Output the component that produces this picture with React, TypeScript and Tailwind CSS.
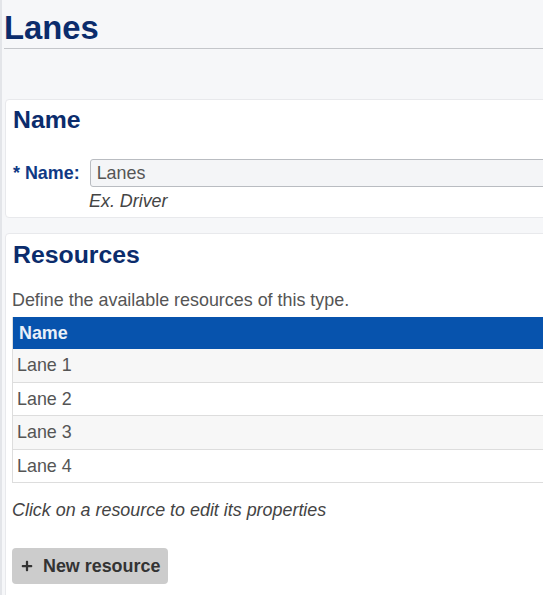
import React from "react";
import { FaPlus } from "react-icons/fa";

const resources = ["Lane 1", "Lane 2", "Lane 3", "Lane 4"];

export default function App() {
    return (
        <div className="min-h-screen w-full overflow-hidden bg-[#f6f7f9] border-l-2 border-[#e3e5e9] font-['Liberation_Sans',Arial,sans-serif] text-[17.9px] leading-[20px] text-[#555]">
            <h1 className="ml-[2px] pt-[10px] pb-[2px] border-b border-[#c4c6ca] text-[32.8px] leading-[36px] font-bold text-[#0b2c6c]">
                Lanes
            </h1>

            <div className="ml-[3px] mt-[50px] w-[600px] rounded-[4px] border border-[#e8e9ec] bg-white px-[6px] pt-[6px] pb-[6px]">
                <h2 className="pl-[1px] text-[24.8px] leading-[28px] font-bold text-[#0b2c6c]">Name</h2>
                <div className="mt-[25px] flex items-center gap-[10px]">
                    <label className="pl-[1px] font-bold text-[#0f3985]">* Name:</label>
                    <div className="flex h-[28px] flex-1 items-center rounded-[3px] border border-[#b9bcc1] bg-[#f4f5f7] pl-[6px] text-[#555]">
                        Lanes
                    </div>
                </div>
                <div className="mt-[4px] ml-[77px] italic text-[#444]">Ex. Driver</div>
            </div>

            <div className="ml-[3px] mt-[15px] w-[600px] rounded-[4px] border border-[#e8e9ec] bg-white px-[6px] pt-[7px] pb-[20px]">
                <h2 className="pl-[1px] text-[24.8px] leading-[28px] font-bold text-[#0b2c6c]">Resources</h2>
                <p className="mt-[21px]">Define the available resources of this type.</p>

                <div className="mt-[7px] border-l border-[#dddddd]">
                    <div className="flex h-[32px] items-center bg-[#0753ad] pl-[6px] font-bold text-[#eaf0f8]">Name</div>
                    {resources.map((r, i) => (
                        <div
                            key={r}
                            className={
                                i % 2 === 0
                                    ? "flex h-[33.6px] items-center border-b border-[#dddddd] bg-[#f7f7f7] pl-[4px]"
                                    : "flex h-[33.6px] items-center border-b border-[#dddddd] bg-white pl-[4px]"
                            }
                        >
                            {r}
                        </div>
                    ))}
                </div>

                <p className="mt-[17px] italic text-[#444]">Click on a resource to edit its properties</p>

                <button className="mt-[28px] flex h-[36px] w-[156px] items-center gap-[10px] rounded-[4px] bg-[#cccccc] pl-[9px] font-bold text-[#333]">
                    <FaPlus className="h-[12px] w-[12px]" />
                    New resource
                </button>
            </div>
        </div>
    );
}
